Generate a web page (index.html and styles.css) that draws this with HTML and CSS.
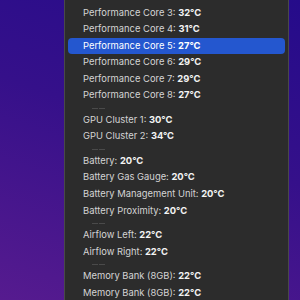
FILE: index.html
```html
<!DOCTYPE html>
<html lang="en">
<head>
<meta charset="UTF-8" />
<title>Sensors</title>
<link rel="stylesheet" href="styles.css">
</head>
<body>

<div class="menu">
  <div class="item">Performance Core 2: <b>30°C</b></div>
  <div class="item">Performance Core 3: <b>32°C</b></div>
  <div class="item">Performance Core 4: <b>31°C</b></div>
  <div class="item active">Performance Core 5: <b>27°C</b></div>
  <div class="item">Performance Core 6: <b>29°C</b></div>
  <div class="item">Performance Core 7: <b>29°C</b></div>
  <div class="item">Performance Core 8: <b>27°C</b></div>
  <div class="sep"></div>
  <div class="item">GPU Cluster 1: <b>30°C</b></div>
  <div class="item">GPU Cluster 2: <b>34°C</b></div>
  <div class="sep"></div>
  <div class="item">Battery: <b>20°C</b></div>
  <div class="item">Battery Gas Gauge: <b>20°C</b></div>
  <div class="item">Battery Management Unit: <b>20°C</b></div>
  <div class="item">Battery Proximity: <b>20°C</b></div>
  <div class="sep"></div>
  <div class="item">Airflow Left: <b>22°C</b></div>
  <div class="item">Airflow Right: <b>22°C</b></div>
  <div class="sep"></div>
  <div class="item">Memory Bank (8GB): <b>22°C</b></div>
  <div class="item">Memory Bank (8GB): <b>22°C</b></div>
</div>

</body>
</html>
```

FILE: styles.css
```css
html, body {
  height: 100%;
}
body {
  margin: 0;
  overflow: hidden;
  background: linear-gradient(200deg, #250b8a 0%, #35108a 45%, #561b8f 100%);
  font-family: 'Inter', 'Liberation Sans', sans-serif;
}
.menu {
  margin: -12.1px 0 0 64px;
  width: 219px;
  padding: 0 2px;
  background: #2c2c2c;
  border-left: 1px solid #494949;
  border-right: 1px solid #494949;
}
.item {
  height: 16.6px;
  line-height: 16.6px;
  padding-left: 15px;
  margin: 0 1px;
  border-radius: 4px;
  font-size: 9.4px;
  color: #d4d4d4;
  white-space: nowrap;
}
.item b {
  color: #f4f4f4;
  font-weight: 700;
}
.item.active {
  background: #2457cf;
  color: #fff;
}
.item.active b {
  color: #fff;
}
.sep {
  height: 7.8px;
  position: relative;
}
.sep::before,
.sep::after {
  content: '';
  position: absolute;
  top: 3.5px;
  width: 6px;
  height: 1px;
  background: #4a4a4a;
}
.sep::before {
  left: 25px;
}
.sep::after {
  left: 32px;
}
```
